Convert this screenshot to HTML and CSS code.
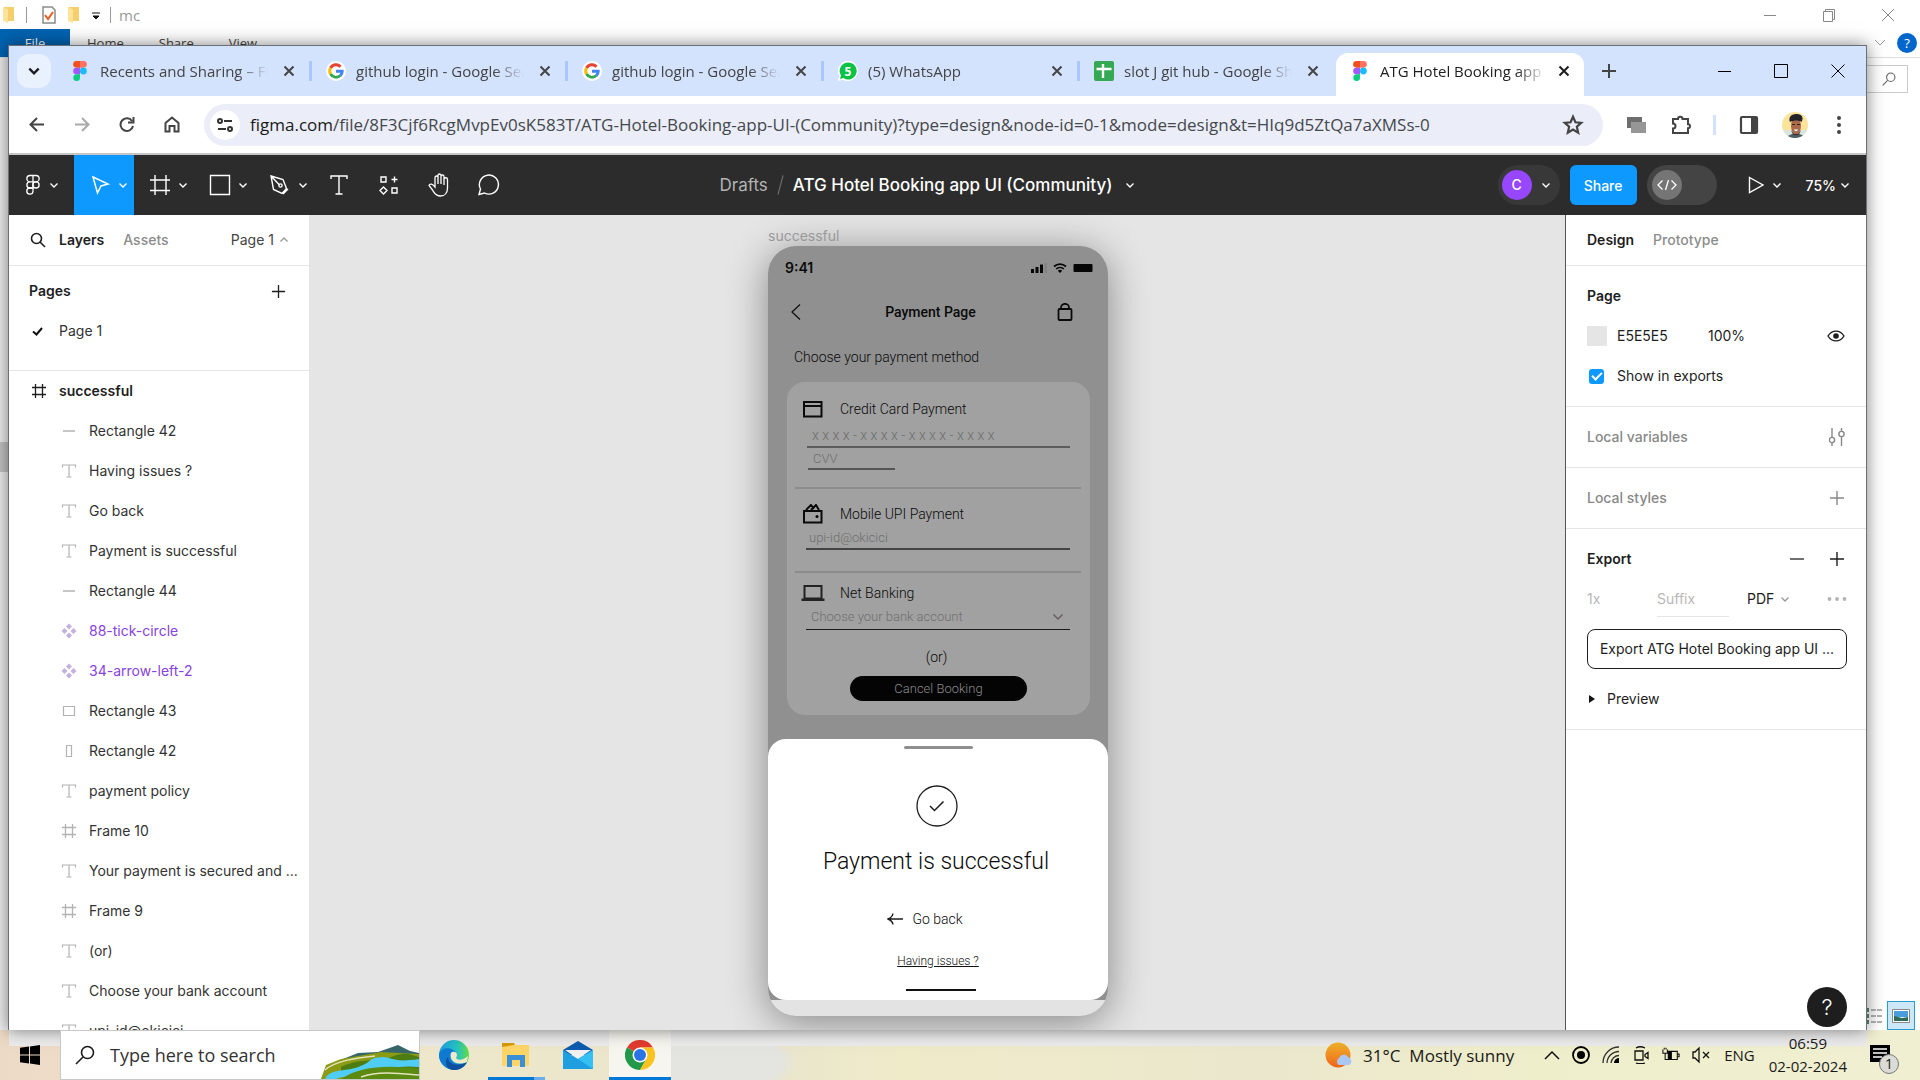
FILE: index.html
```html
<!DOCTYPE html>
<html lang="en">
<head>
<meta charset="utf-8">
<title>ATG Hotel Booking app UI (Community) – Figma</title>
<link rel="stylesheet" href="styles.css">
</head>
<body>
<svg class="defs" aria-hidden="true">
  <symbol id="chev" viewBox="0 0 10 10"><path d="M1.500 3.500 5 7l3.500-3.500" fill="none" stroke="currentColor" stroke-width="1.400"/></symbol>
  <symbol id="cross" viewBox="0 0 12 12"><path d="M1.500 1.500l9 9m0-9l-9 9" fill="none" stroke="currentColor" stroke-width="2"/></symbol>
  <symbol id="plus" viewBox="0 0 16 16"><path d="M8 1v14M1 8h14" fill="none" stroke="currentColor" stroke-width="1.400"/></symbol>
  <symbol id="figma" viewBox="0 0 14 20"><path d="M7 0H3.500a3.300 3.300 0 0 0 0 6.660H7z" fill="#f24e1e"/><path d="M7 0h3.500a3.300 3.300 0 0 1 0 6.660H7z" fill="#ff7262"/><path d="M7 6.660H3.500a3.300 3.300 0 0 0 0 6.660H7z" fill="#a259ff"/><circle cx="10.400" cy="10" r="3.400" fill="#1abcfe"/><path d="M7 13.320H3.500A3.340 3.340 0 1 0 7 16.700z" fill="#0acf83"/></symbol>
  <symbol id="google" viewBox="0 0 20 20"><circle cx="10" cy="10" r="10" fill="#fff"/><g fill="none" stroke-width="3"><path d="M4.500 7A6.200 6.200 0 0 1 14.500 5.700" stroke="#ea4335"/><path d="M4.700 13.200A6.200 6.200 0 0 1 4.500 6.900" stroke="#fbbc05"/><path d="M14.300 14.500A6.200 6.200 0 0 1 4.600 13" stroke="#34a853"/><path d="M10 10.200h6.200c0 1.800-.700 3.300-1.900 4.400" stroke="#4285f4"/></g></symbol>
  <symbol id="text" viewBox="0 0 16 16"><path d="M1.500 4.500V2h13v2.500M8 2v12M5.500 14h5" fill="none" stroke="currentColor" stroke-width="1.200"/></symbol>
  <symbol id="frame" viewBox="0 0 16 16"><path d="M4.500 1v14M11.500 1v14M1 4.500h14M1 11.500h14" fill="none" stroke="currentColor" stroke-width="1.300"/></symbol>
  <symbol id="line" viewBox="0 0 16 16"><path d="M2 8h12" fill="none" stroke="currentColor" stroke-width="1.500"/></symbol>
  <symbol id="rect" viewBox="0 0 16 16"><path d="M2.500 3.500h11v9h-11z" fill="none" stroke="currentColor" stroke-width="1.200"/></symbol>
  <symbol id="tall" viewBox="0 0 16 16"><path d="M5.500 2.500h5v11h-5z" fill="none" stroke="currentColor" stroke-width="1.200"/></symbol>
  <symbol id="comp" viewBox="0 0 16 16"><path d="M8 .500l3 3-3 3-3-3zM8 9.500l3 3-3 3-3-3zM3.500 5l3 3-3 3-3-3zM12.500 5l3 3-3 3-3-3z" fill="currentColor"/></symbol>
  <symbol id="folder" viewBox="0 0 14 18"><path d="M2 1h10v14H4z" fill="#f5cf6b"/><path d="M1 1l5 2.500V17l-5-2z" fill="#ffe398"/></symbol>
  <symbol id="search" viewBox="0 0 20 20"><circle cx="12.500" cy="7.500" r="6" fill="none" stroke="currentColor" stroke-width="1.600"/><path d="M8 12L1 19" stroke="currentColor" stroke-width="1.600"/></symbol>
</svg>

<section class="explorer" aria-label="File Explorer">
  <header class="ex-title">
    <svg class="ex-folder"><use href="#folder"/></svg><i class="ex-sep"></i>
    <svg class="ex-doc" viewBox="0 0 14 18"><path d="M1 1h9l3 3v13H1z" fill="#fff" stroke="#8a8a8a" stroke-width="1.500"/><path d="M3 9l3 4 5-7" fill="none" stroke="#ef5a1c" stroke-width="2"/></svg>
    <svg class="ex-folder"><use href="#folder"/></svg>
    <svg class="ex-drop" viewBox="0 0 8 8"><path d="M0 1h8M1 4h6L4 7z" fill="#111" stroke="#111"/></svg>
    <i class="ex-sep"></i><span class="ex-name">mc</span>
    <span class="ex-ctl">
      <svg viewBox="0 0 14 14"><path d="M1 7.500h12" stroke="#888" fill="none"/></svg>
      <svg viewBox="0 0 14 14"><path d="M1.500 3.500h9v10h-9zM3.500 3.500v-2h9v10h-2" stroke="#888" fill="none"/></svg>
      <svg viewBox="0 0 14 14"><path d="M1 1l12 12M13 1L1 13" stroke="#888" fill="none"/></svg>
    </span>
  </header>
  <nav class="ex-menu">
    <button class="ex-file">File</button><button>Home</button><button>Share</button><button>View</button>
    <svg class="ex-chev" viewBox="0 0 12 8"><path d="M1 1l5 5 5-5" stroke="#999" fill="none"/></svg>
    <button class="ex-help">?</button>
  </nav>
  <div class="ex-body">
    <i class="ex-thumb"></i>
    <div class="ex-right">
      <div class="ex-search"><svg><use href="#search"/></svg></div>
      <div class="ex-views">
        <svg class="ex-list" viewBox="0 0 16 18"><path d="M0 1h3v4H0zM0 7h3v4H0zM0 13h3v4H0z" fill="#5c8a70"/><path d="M5 3h11M5 9h11M5 15h11" stroke="#666" stroke-dasharray="5 1"/></svg>
        <span class="ex-view-on"><svg viewBox="0 0 18 14"><path d="M.500.500h17v13H.500z" fill="#fff" stroke="#888"/><path d="M2 2h14v6H2z" fill="#4b9ede"/><path d="M2 7l8 2 6-1v4H2z" fill="#2e6b58"/></svg></span>
      </div>
    </div>
  </div>
</section>

<main class="window">
  <header class="tabs">
    <button class="tab-search" aria-label="Search tabs"><svg viewBox="0 0 12 12"><path d="M2 4l4 4 4-4" fill="none" stroke="#1b1b1f" stroke-width="2"/></svg></button>
    <div class="tab"><svg class="fav-figma"><use href="#figma"/></svg><span>Recents and Sharing – Figma</span><button aria-label="Close"><svg><use href="#cross"/></svg></button></div>
    <div class="tab"><svg><use href="#google"/></svg><span>github login - Google Search</span><button aria-label="Close"><svg><use href="#cross"/></svg></button></div>
    <div class="tab"><svg><use href="#google"/></svg><span>github login - Google Search</span><button aria-label="Close"><svg><use href="#cross"/></svg></button></div>
    <div class="tab"><svg viewBox="0 0 20 20"><path d="M10 0a10 10 0 1 1-5 18.700L0 20l1.300-5A10 10 0 0 1 10 0z" fill="#fff"/><path d="M10 1.500a8.500 8.500 0 1 1-4.500 15.600L2 18l1-3.500A8.500 8.500 0 0 1 10 1.500z" fill="#0ac244"/><text x="10" y="14.500" class="badge5">5</text></svg><span>(5) WhatsApp</span><button aria-label="Close"><svg><use href="#cross"/></svg></button></div>
    <div class="tab last"><svg viewBox="0 0 20 20"><rect width="20" height="20" rx="2" fill="#34a853"/><path d="M9 3v14M2.500 8h15" stroke="#fff" stroke-width="2.400"/></svg><span>slot J git hub - Google Sheets</span><button aria-label="Close"><svg><use href="#cross"/></svg></button></div>
    <div class="tab active"><svg class="fav-figma"><use href="#figma"/></svg><span>ATG Hotel Booking app UI (Community)</span><button aria-label="Close"><svg><use href="#cross"/></svg></button></div>
    <button class="new-tab" aria-label="New tab"><svg viewBox="0 0 14 14"><path d="M7 0v14M0 7h14" stroke="#444" stroke-width="2"/></svg></button>
    <div class="win-ctl">
      <button aria-label="Minimize"><svg viewBox="0 0 14 14"><path d="M1 7.500h13" stroke="#000"/></svg></button>
      <button aria-label="Maximize"><svg viewBox="0 0 14 14"><path d="M.500.500h13v13H.500z" fill="none" stroke="#000"/></svg></button>
      <button aria-label="Close"><svg viewBox="0 0 14 14"><path d="M.500.500l13 13m0-13l-13 13" stroke="#000"/></svg></button>
    </div>
  </header>

  <div class="nav">
    <button aria-label="Back"><svg viewBox="0 0 16 16"><path d="M15 8H2M8 1.500L1.500 8 8 14.500" fill="none" stroke="#444" stroke-width="2"/></svg></button>
    <button aria-label="Forward"><svg viewBox="0 0 16 16"><path d="M1 8h13M8 1.500L14.500 8 8 14.500" fill="none" stroke="#aaa" stroke-width="2"/></svg></button>
    <button aria-label="Reload"><svg viewBox="0 0 16 16"><path d="M14 9.500A6.300 6.300 0 1 1 13 4.500M14.500.500V6H9" fill="none" stroke="#444" stroke-width="2"/></svg></button>
    <button aria-label="Home"><svg viewBox="0 0 16 16"><path d="M1.500 6.500L8 1l6.500 5.500v8.500h-4V9.500h-5V15h-4z" fill="none" stroke="#444" stroke-width="2"/></svg></button>
    <div class="omni">
      <span class="site"><svg viewBox="0 0 16 16"><g fill="none" stroke="#333" stroke-width="2"><circle cx="3" cy="4" r="2"/><path d="M7 4h8M1 12h8"/><circle cx="13" cy="12" r="2"/></g></svg></span>
      <div class="url" role="textbox" aria-label="Address"><b>figma.com</b>/file/8F3Cjf6RcgMvpEv0sK583T/ATG-Hotel-Booking-app-UI-(Community)?type=design&amp;node-id=0-1&amp;mode=design&amp;t=HIq9d5ZtQa7aXMSs-0</div>
      <svg class="star" viewBox="0 0 20 20"><path d="M10 2.500l2.200 5 5.300.500-4 3.600 1.200 5.400-4.700-2.900L5.300 17l1.200-5.400-4-3.600 5.300-.500z" fill="none" stroke="#444" stroke-width="2"/></svg>
    </div>
    <div class="nav-right">
      <svg viewBox="0 0 20 20"><path d="M1 2h15v11H1z" fill="#6e6e6e"/><path d="M5 7h15v11H5z" fill="#969696"/></svg>
      <svg viewBox="0 0 20 20"><path d="M2 4h5a2.200 2.200 0 0 1 4.500 0H17v5.200a2 2 0 0 1 0 4V18H2v-4.500a2.500 2.500 0 0 0 0-5z" fill="none" stroke="#444" stroke-width="2"/></svg>
      <i class="nav-sep"></i>
      <svg viewBox="0 0 20 20"><rect x="2" y="2" width="16" height="16" rx="1" fill="none" stroke="#444" stroke-width="2.200"/><path d="M12 2h6v16h-6z" fill="#444"/></svg>
      <svg class="face" viewBox="0 0 26 26"><clipPath id="fc"><circle cx="13" cy="13" r="13"/></clipPath><g clip-path="url(#fc)"><path d="M0 0h26v26H0z" fill="#fbe39a"/><path d="M0 18h26v8H0z" fill="#d8e6e0"/><path d="M5 26c2-6 16-6 17 0z" fill="#4a5d66"/><ellipse cx="14" cy="14" rx="5" ry="8" fill="#a9694a"/><path d="M8 10c-2-4 1-8.500 7-8 5 0 7 4 4.500 8-3-2-7-2-11.500 0z" fill="#22232b"/><path d="M9.500 18c0 7 9 7 9 0-1 2-1.500 4-4.500 4s-3.500-2-4.500-4z" fill="#4a2c22"/><path d="M11.500 17.500h5l-2.500 2z" fill="#fff"/><path d="M10 12.500h3M15 12.500h3" stroke="#3a241d"/></g></svg>
      <svg viewBox="0 0 20 20"><g fill="#444"><circle cx="10" cy="3" r="2"/><circle cx="10" cy="10" r="2"/><circle cx="10" cy="17" r="2"/></g></svg>
    </div>
  </div>

  <div class="figbar">
    <div class="tools">
      <button class="main-menu" aria-label="Main menu"><svg viewBox="0 0 24 24"><g fill="none" stroke="#fff" stroke-width="1.300"><path d="M12 2.500H9a3.100 3.100 0 0 0 0 6.300h3zM12 2.500h3a3.100 3.100 0 0 1 0 6.300h-3zM12 8.800H9A3.100 3.100 0 0 0 9 15h3z"/><circle cx="15" cy="11.900" r="3.100"/><path d="M12 15H9a3.100 3.100 0 1 0 3 3.300z"/></g></svg><svg class="cv"><use href="#chev"/></svg></button>
      <button class="on" aria-label="Move"><svg viewBox="0 0 24 24"><path d="M5 4l15 7-7 2-3.500 7z" fill="none" stroke="#fff" stroke-width="1.500"/></svg><svg class="cv"><use href="#chev"/></svg></button>
      <button aria-label="Frame"><svg viewBox="0 0 24 24"><path d="M7 2v20M18 2v20M2 7h20M2 17.500h20" stroke="#fff" stroke-width="1.400"/></svg><svg class="cv"><use href="#chev"/></svg></button>
      <button aria-label="Rectangle"><svg viewBox="0 0 24 24"><path d="M2.500 2.500h19v19h-19z" fill="none" stroke="#fff" stroke-width="1.400"/></svg><svg class="cv"><use href="#chev"/></svg></button>
      <button aria-label="Pen"><svg viewBox="0 0 24 24"><g fill="none" stroke="#fff" stroke-width="1.400"><path d="M3 3l12 3.500 3.500 9-4.500 5-8.500-4zM3 3l8.500 9M15 21l5-5"/><circle cx="12.500" cy="12.500" r="1.600"/></g></svg><svg class="cv"><use href="#chev"/></svg></button>
      <button class="solo" aria-label="Text"><svg viewBox="0 0 24 24"><path d="M4 6V3h16v3M12 3v18M8.500 21h7" fill="none" stroke="#fff" stroke-width="1.400"/></svg></button>
      <button class="solo" aria-label="Resources"><svg viewBox="0 0 24 24"><path d="M4 4h5v5H4zM17.500 3.500v6M14.500 6.500h6M15 15h5v5h-5zM6.500 14l3.500 3.500L6.500 21 3 17.500z" fill="none" stroke="#fff" stroke-width="1.400"/></svg></button>
      <button class="solo" aria-label="Hand"><svg viewBox="0 0 24 24"><path d="M8 12V4.500a1.500 1.500 0 0 1 3 0V11 2.500a1.500 1.500 0 0 1 3 0V11 3.500a1.500 1.500 0 0 1 3 0V12 6.500a1.500 1.500 0 0 1 3.500 0V15c0 5-3 8-7 8-5 0-6-3-8-6l-3.500-4.500c1-2.500 3.500-1.500 6 1.500z" fill="none" stroke="#fff" stroke-width="1.300"/></svg></button>
      <button class="solo" aria-label="Comment"><svg viewBox="0 0 24 24"><path d="M2 21.500l1.500-5.500A9.500 9.500 0 1 1 7.500 20z" fill="none" stroke="#fff" stroke-width="1.400"/></svg></button>
    </div>
    <h1 class="doc"><span>Drafts</span><i></i>ATG Hotel Booking app UI (Community)<svg class="cv"><use href="#chev"/></svg></h1>
    <div class="fig-right">
      <button class="user"><b>C</b><svg class="cv"><use href="#chev"/></svg></button>
      <button class="share">Share</button>
      <button class="dev" aria-label="Dev mode"><span><svg viewBox="0 0 20 12"><path d="M5.500 1.500L1 6l4.500 4.500M14.500 1.500L19 6l-4.500 4.500M11.500 1l-3 10" fill="none" stroke="#fff" stroke-width="1.300"/></svg></span></button>
      <button class="play" aria-label="Present"><svg viewBox="0 0 16 18"><path d="M1.500 1.500L15 9 1.500 16.500z" fill="none" stroke="#fff" stroke-width="1.400"/></svg><svg class="cv"><use href="#chev"/></svg></button>
      <button class="zoom">75%<svg class="cv"><use href="#chev"/></svg></button>
    </div>
  </div>

  <div class="work">
    <aside class="left">
      <div class="left-head"><svg class="mag" viewBox="0 0 16 16"><circle cx="6.500" cy="6.500" r="5" fill="none" stroke="#1e1e1e" stroke-width="1.600"/><path d="M10 10l5 5" stroke="#1e1e1e" stroke-width="1.600"/></svg><button class="strong">Layers</button><button class="muted">Assets</button><button class="pg">Page 1<svg class="cv up"><use href="#chev"/></svg></button></div>
      <section class="pages">
        <div class="pages-head"><h2>Pages</h2><button aria-label="Add page"><svg><use href="#plus"/></svg></button></div>
        <div class="row top"><svg class="check" viewBox="0 0 16 16"><path d="M2 8.500L5.500 11.500 11 5" fill="none" stroke="#111" stroke-width="2"/></svg>Page 1</div>
      </section>
      <ul class="layers">
        <li class="row top strong"><svg><use href="#frame"/></svg>successful</li>
        <li class="row"><svg><use href="#line"/></svg>Rectangle 42</li>
        <li class="row"><svg><use href="#text"/></svg>Having issues ?</li>
        <li class="row"><svg><use href="#text"/></svg>Go back</li>
        <li class="row"><svg><use href="#text"/></svg>Payment is successful</li>
        <li class="row"><svg><use href="#line"/></svg>Rectangle 44</li>
        <li class="row comp"><svg><use href="#comp"/></svg>88-tick-circle</li>
        <li class="row comp"><svg><use href="#comp"/></svg>34-arrow-left-2</li>
        <li class="row"><svg><use href="#rect"/></svg>Rectangle 43</li>
        <li class="row"><svg><use href="#tall"/></svg>Rectangle 42</li>
        <li class="row"><svg><use href="#text"/></svg>payment policy</li>
        <li class="row"><svg><use href="#frame"/></svg>Frame 10</li>
        <li class="row"><svg><use href="#text"/></svg>Your payment is secured and ...</li>
        <li class="row"><svg><use href="#frame"/></svg>Frame 9</li>
        <li class="row"><svg><use href="#text"/></svg>(or)</li>
        <li class="row"><svg><use href="#text"/></svg>Choose your bank account</li>
        <li class="row"><svg><use href="#text"/></svg>upi-id@okicici</li>
      </ul>
    </aside>

    <div class="canvas">
      <div class="artboard">
        <p class="ab-name">successful</p>
        <div class="phone">
          <div class="screen">
            <div class="status"><b>9:41</b>
              <svg class="sig" viewBox="0 0 16 10"><path d="M0 6h3v4H0zM4.500 4h3v6h-3zM9 1.500h3V10H9z" fill="#060606"/><path d="M13.500 0H16v10h-2.500z" fill="#848484"/></svg>
              <svg class="wifi" viewBox="0 0 14 10"><path d="M1 3.500a9 9 0 0 1 12 0M3.200 6a5.500 5.500 0 0 1 7.600 0" fill="none" stroke="#060606" stroke-width="1.700"/><path d="M4.800 7.700a3.400 3.400 0 0 1 4.400 0L7 10z" fill="#060606"/></svg>
              <svg class="bat" viewBox="0 0 20 10"><rect x=".5" y="1" width="19" height="8" rx="1" fill="#060606"/></svg>
            </div>
            <div class="ph-head"><svg class="back" viewBox="0 0 10 16"><path d="M9 .500L1 8l8 7.500" fill="none" stroke="#111" stroke-width="1.300"/></svg><h2>Payment Page</h2><svg class="lock" viewBox="0 0 16 18"><path d="M4 6V4.500a4 3.700 0 0 1 8 0V6" fill="none" stroke="#0a0a0a" stroke-width="1.700"/><rect x="1.500" y="6" width="13" height="11" rx="1" fill="none" stroke="#0a0a0a" stroke-width="1.800"/></svg></div>
            <p class="choose">Choose your payment method</p>
            <div class="card">
              <div class="method"><svg viewBox="0 0 24 20"><path d="M3 3h17.500v14.500H3zM3 7h17.500" fill="none" stroke="#0a0a0a" stroke-width="2"/></svg><label for="cc">Credit Card Payment</label></div>
              <input id="cc" class="f-card" placeholder="x x x x - x x x x - x x x x - x x x x">
              <input class="f-cvv" aria-label="CVV" placeholder="CVV">
              <hr>
              <div class="method upi"><svg viewBox="0 0 24 20"><path d="M3 7h17.500v11.500H3zM5 6l5-5 3 4M10 6l5-5 3 5" fill="none" stroke="#0a0a0a" stroke-width="2"/><circle cx="16" cy="12.500" r="1.500"/></svg><label for="upi">Mobile UPI Payment</label></div>
              <input id="upi" class="f-upi" placeholder="upi-id@okicici">
              <hr>
              <div class="method net"><svg viewBox="0 0 24 20"><path d="M3.500 3h17v12.500h-17z" fill="none" stroke="#222" stroke-width="2"/><path d="M.500 15.500h23v2.500H.500z" fill="#222"/></svg><label for="bank">Net Banking</label></div>
              <div class="f-bank"><select id="bank"><option>Choose your bank account</option></select><svg viewBox="0 0 12 8"><path d="M1.500 1.500L6 6l4.500-4.500" fill="none" stroke="#695f62" stroke-width="1.500"/></svg></div>
              <p class="or">(or)</p>
              <button class="cancel">Cancel Booking</button>
            </div>
            <div class="sheet">
              <i class="grab"></i>
              <svg class="tick" viewBox="0 0 44 44"><circle cx="22" cy="22" r="20" fill="none" stroke="#1c1c1c" stroke-width="1.300"/><path d="M15 22l4.500 4.500 9-9" fill="none" stroke="#1c1c1c" stroke-width="1.500"/></svg>
              <p class="ok">Payment is successful</p>
              <button class="goback"><svg viewBox="0 0 16 12"><path d="M16 6H1M6 .500C5.500 3.500 3.500 5 1 6c2.500 1 4.500 2.500 5 5.500" fill="none" stroke="#1c1c1c" stroke-width="1.400"/></svg>Go back</button>
              <a class="issues" href="#help">Having issues ?</a>
              <i class="homebar"></i>
            </div>
          </div>
        </div>
      </div>
    </div>

    <aside class="right">
      <div class="right-head"><button class="strong">Design</button><button class="muted">Prototype</button></div>
      <section class="page-sec">
        <h2>Page</h2>
        <div class="r-row"><i class="swatch"></i><span class="hex">E5E5E5</span><span>100%</span><svg class="eye" viewBox="0 0 18 12"><path d="M1 6c4-6.500 12-6.500 16 0-4 6.500-12 6.500-16 0z" fill="none" stroke="#1e1e1e" stroke-width="1.400"/><circle cx="9" cy="6" r="2.800" fill="#1e1e1e"/></svg></div>
        <label class="r-row exp"><input type="checkbox" checked>Show in exports</label>
      </section>
      <section class="thin"><h2>Local variables</h2><svg viewBox="0 0 16 18"><g fill="none" stroke="#888" stroke-width="1.400"><path d="M3 0v9M3 15v3M12.500 0v3M12.500 9v9"/><circle cx="3" cy="12" r="2.600"/><circle cx="12.500" cy="6" r="2.600"/></g></svg></section>
      <section class="thin"><h2>Local styles</h2><svg><use href="#plus"/></svg></section>
      <section class="export">
        <div class="r-row"><h2>Export</h2><svg class="minus" viewBox="0 0 16 16"><path d="M1 8h14" stroke="#333" stroke-width="1.400"/></svg><svg class="add"><use href="#plus"/></svg></div>
        <div class="r-row opts"><input class="scale" aria-label="Scale" placeholder="1x"><input class="suffix" aria-label="Suffix" placeholder="Suffix"><select aria-label="Format"><option>PDF</option></select><svg class="cv"><use href="#chev"/></svg><svg class="dots" viewBox="0 0 20 4"><g fill="#b3b3b3"><circle cx="2.500" cy="2" r="1.900"/><circle cx="10" cy="2" r="1.900"/><circle cx="17.500" cy="2" r="1.900"/></g></svg></div>
        <button class="do-export">Export ATG Hotel Booking app UI ...</button>
        <button class="preview"><svg viewBox="0 0 6 8"><path d="M0 0l6 4-6 4z" fill="#111"/></svg>Preview</button>
      </section>
      <button class="help">?</button>
    </aside>
  </div>
</main>

<footer class="taskbar">
  <button class="start" aria-label="Start"><svg viewBox="0 0 20 20"><path d="M0 2.800l9-1.300v8H0zM10 1.400L20 0v9.500H10zM0 10.500h9v8l-9-1.300zM10 10.500h10V20l-10-1.400z"/></svg></button>
  <label class="tb-search"><svg class="tb-mag"><use href="#search"/></svg><input aria-label="Search" placeholder="Type here to search">
    <svg class="hills" viewBox="0 0 98 34"><path d="M22 14l15-6 20-1 20-7 12 6 9 2v26H0z" fill="#36656a"/><path d="M5 20l15-6 40-7 38 2v25H0z" fill="#8b9b14"/><path d="M20 22c20-10 35-4 50-10s20-2 28 0v18H20z" fill="#4d7d12"/><path d="M4 34c6-12 22-6 38-14 10-4 4-7 20-8 8 0 10 6 36 2v8c-20-2-30 2-45 6s-30 2-38 6z" fill="#4fcdf5"/><path d="M20 34c20-14 50-14 78-10v10z" fill="#5b8a10"/><path d="M4 25c10-9 30-12 50-14M40 32c18-6 35-4 58-2" fill="none" stroke="#e4e3bd" stroke-width="1.500"/></svg>
  </label>
  <nav class="apps">
    <button aria-label="Edge"><svg viewBox="0 0 30 30"><defs><linearGradient id="eg" x1="0" x2="1"><stop offset="0" stop-color="#1b9de2"/><stop offset=".6" stop-color="#27c3c3"/><stop offset="1" stop-color="#62dc45"/></linearGradient></defs><circle cx="15" cy="15" r="15" fill="url(#eg)"/><path d="M0 15C1 7 13 6 17 13c-5-1-7 5-4 8 4 4 10 3 15 1-4 8-13 10-20 6C3 25 0 20 0 15z" fill="#0f7bd0"/><path d="M9 17c0 8 10 10 19 5-4 8-12 9-17 7S6 20 9 17z" fill="#10509f"/><path d="M13 12c5-1 6 3 4 6 2 3 8 2 12-2l-1 6c-8 3-13 1-15-2s-2-7 0-8z" fill="#efe8cb"/></svg></button>
    <button class="run part" aria-label="File Explorer"><svg viewBox="0 0 30 30"><path d="M1 3h12l2 4H1z" fill="#d99a06"/><path d="M1 7l12-2h15v21H1z" fill="#fed567"/><path d="M6 27V15h18v12h-5v-7h-8v7z" fill="#3a8fd8"/></svg></button>
    <button aria-label="Mail"><svg viewBox="0 0 30 30"><path d="M0 10L15 1l15 9v5H0z" fill="#0b5cae"/><path d="M2 10h26L15 19z" fill="#f1f1f1"/><path d="M0 10l15 9 15-9v19H0z" fill="#1f9fe0"/><path d="M30 10v19L15 19z" fill="#35c0f3"/></svg></button>
    <button class="run now" aria-label="Chrome"><svg viewBox="0 0 30 30"><path d="M15 15L2 7.500A15 15 0 0 1 28 7.500H15z" fill="#e33b2e"/><path d="M15 15L2 7.500A15 15 0 0 0 15 30l6.500-11.200z" fill="#22984a"/><path d="M15 7.500h13A15 15 0 0 1 15 30l6.500-11.200z" fill="#fcc31e"/><circle cx="15" cy="15" r="7.500" fill="#fff"/><circle cx="15" cy="15" r="6" fill="#2b74e8"/></svg></button>
  </nav>
  <div class="tray">
    <svg class="sun" viewBox="0 0 28 28"><defs><linearGradient id="sg" y2="1" x2="0"><stop offset="0" stop-color="#f0b429"/><stop offset="1" stop-color="#f0631a"/></linearGradient></defs><circle cx="13" cy="14" r="12.500" fill="url(#sg)"/><path d="M14 24a4 4 0 0 1 0-7 5 5 0 0 1 9-1 4.300 4.300 0 0 1 1 8z" fill="#a9c8f5"/></svg>
    <span class="temp">31°C&nbsp; Mostly sunny</span>
    <svg class="t-up" viewBox="0 0 16 10"><path d="M1 9l7-7 7 7" fill="none" stroke="#111" stroke-width="1.500"/></svg>
    <svg viewBox="0 0 18 18"><circle cx="9" cy="9" r="8" fill="none" stroke="#000" stroke-width="1.800"/><circle cx="9" cy="9" r="4"/></svg>
    <svg viewBox="0 0 18 18"><g fill="none" stroke="#333" stroke-width="1.300"><path d="M1 17A16 16 0 0 1 17 1M5 17A12 12 0 0 1 17 5.500M9 17a8 8 0 0 1 8-7.500"/></g><path d="M12 17a5 5 0 0 1 5-5v5z"/></svg>
    <svg viewBox="0 0 18 18"><path d="M3 5h8v9H3zM13 8.500l3-2v6l-3-2zM4 2q4-2.500 9 0M4 17q4 1.500 9 0" fill="none" stroke="#111" stroke-width="1.300"/></svg>
    <svg viewBox="0 0 20 18"><path d="M7 5h10v9H7zM1 3v4h5V3M2.500 1v2M4.500 1v2M3.500 7v7H7M17 8h2v3h-2" fill="none" stroke="#111" stroke-width="1.200"/><path d="M7 5h4v9H7z"/></svg>
    <svg viewBox="0 0 18 18"><path d="M1 6h2l4-4v14l-4-4H1zM11 6l6 6M17 6l-6 6" fill="none" stroke="#111" stroke-width="1.300"/></svg>
    <span class="lang">ENG</span>
    <time class="clock"><span>06:59</span><span>02-02-2024</span></time>
    <button class="note" aria-label="Notifications"><svg viewBox="0 0 20 20"><path d="M0 0h20v17h-6v3l-5-3H0z"/><path d="M3 4h14M3 8h14M3 12h9" stroke="#fff" stroke-width="1.300"/></svg><b>1</b></button>
  </div>
</footer>
</body>
</html>
```

FILE: styles.css
```css
* { box-sizing: border-box; }
body { margin: 0; height: 100vh; overflow: hidden; position: relative; display: flex; flex-direction: column; background: #eee8ca; font-family: Inter, "Liberation Sans", sans-serif; font-size: 14px; color: #1e1e1e; }
button { border: 0; padding: 0; margin: 0; background: none; font: inherit; color: inherit; display: flex; align-items: center; justify-content: center; }
input, select { border: 0; padding: 0; margin: 0; background: none; font: inherit; color: inherit; min-width: 0; appearance: none; border-radius: 0; }
h1, h2, p, ul { margin: 0; padding: 0; font-size: inherit; font-weight: inherit; list-style: none; }
svg { display: block; flex: none; }
.defs { position: absolute; width: 0; height: 0; }
.cv { width: 10px; height: 10px; }
.cv.up { transform: rotate(180deg); }
.strong, h2 { font-weight: 600; }
.muted { color: #8c8c8c; font-weight: 500; }

/* File Explorer behind the browser */
.explorer { flex: 1; display: flex; flex-direction: column; background: #fff; font-family: "Open Sans", sans-serif; }
.ex-title { height: 29px; display: flex; align-items: center; padding: 0 25px 0 2px; }
.ex-folder { width: 14px; height: 18px; }
.ex-doc { width: 14px; height: 18px; margin-left: 15px; margin-right: 11px; }
.ex-sep { width: 1px; height: 16px; background: #999; margin-left: 10px; }
.ex-drop { width: 8px; height: 8px; margin: 2px 0 0 11px; }
.ex-name { margin-left: 8px; color: #999; font-size: 15px; }
.ex-ctl { margin-left: auto; display: flex; gap: 45px; }
.ex-ctl svg { width: 14px; height: 14px; }
.ex-menu { height: 29px; display: flex; align-items: center; border-bottom: 1px solid #ddd; padding-right: 3px; color: #444; gap: 35px; font-size: 13px; }
.ex-file { width: 70px; height: 28px; background: #0063b1; color: #fff; margin-right: -18px; }
.ex-chev { width: 12px; height: 8px; margin-left: auto; margin-right: -24px; }
.ex-help { width: 20px; height: 20px; border-radius: 50%; background: #0066cc; color: #fff; }
.ex-body { flex: 1; display: flex; justify-content: space-between; background: linear-gradient(90deg, #eee 9px, #fff 9px); }
.ex-thumb { width: 9px; height: 30px; margin-top: 384px; background: #c4c4c4; }
.ex-right { display: flex; flex-direction: column; justify-content: space-between; padding: 7px 5px 0 0; }
.ex-search { width: 60px; height: 28px; border: 1px solid #ccc; margin-right: 7px; display: flex; align-items: center; justify-content: flex-end; padding-right: 11px; color: #666; }
.ex-search svg { width: 14px; height: 14px; }
.ex-views { display: flex; align-items: center; justify-content: flex-end; gap: 5px; }
.ex-list { width: 16px; height: 18px; }
.ex-view-on { width: 28px; height: 29px; border: 1px solid #2a9bd4; background: #cce8f6; display: flex; align-items: center; justify-content: center; }
.ex-view-on svg { width: 18px; height: 14px; }

/* Browser window */
.window { position: absolute; inset: 45px 53px 50px 8px; border: 1px solid #6c6f78; border-bottom: 0; background: #fff; display: flex; flex-direction: column; box-shadow: 0 0 16px rgba(0,0,0,.5); overflow: hidden; }
.tabs { height: 50px; background: #d3e2fd; display: flex; align-items: center; padding-left: 8px; font-family: "Open Sans", sans-serif; color: #444; flex: none; }
.tab-search { width: 34px; height: 34px; flex: none; border-radius: 12px; background: #e9f0fe; margin-right: 5px; }
.tab-search svg { width: 14px; height: 14px; }
.tab { flex: 0 1 256px; min-width: 0; height: 43px; margin-top: 7px; padding: 0 17px 7px 14px; display: flex; align-items: center; gap: 10px; position: relative; font-size: 15px; }
.tab > svg { width: 20px; height: 20px; }
.tab > .fav-figma { width: 14px; margin: 0 3px; }
.tab > span { flex: 1; min-width: 0; white-space: nowrap; overflow: hidden; -webkit-mask-image: linear-gradient(90deg, #000 calc(100% - 30px), transparent); mask-image: linear-gradient(90deg, #000 calc(100% - 30px), transparent); }
.tab > button { margin-left: 5px; }
.tab > button svg { width: 12px; height: 12px; }
.tab::after { content: ""; position: absolute; right: 0; top: 8px; width: 3px; height: 20px; background: #a8c7fa; }
.tab.last::after, .tab.active::after { display: none; }
.tab.active { flex-basis: 248px; background: #fff; border-radius: 12px 12px 0 0; color: #1e1e1e; padding-right: 14px; }
.tab.active > button { margin-left: 2px; }
.badge5 { font: 700 12px "Open Sans", sans-serif; fill: #fff; text-anchor: middle; }
.new-tab { margin-left: 18px; }
.new-tab svg { width: 14px; height: 14px; }
.win-ctl { margin-left: auto; display: flex; }
.win-ctl button { width: 57px; height: 50px; }
.win-ctl svg { width: 14px; height: 14px; }

.nav { height: 59px; border-bottom: 2px solid #c6c6c6; display: flex; align-items: center; padding-left: 5px; flex: none; }
.nav > button { width: 45px; height: 42px; }
.nav > button svg { width: 16px; height: 17px; }
.omni { flex: 1; height: 42px; margin-left: 10px; border-radius: 21px; background: #ebeef8; display: flex; align-items: center; padding: 0 19px 0 6px; }
.site { width: 30px; height: 30px; border-radius: 50%; background: #fff; display: flex; align-items: center; justify-content: center; margin-right: 10px; }
.site svg { width: 16px; height: 16px; }
.url { flex: 1; white-space: nowrap; overflow: hidden; font: 17px/26px "Open Sans", sans-serif; padding-top: 1px; color: #45484d; }
.url b { font-weight: 400; color: #1a1a1a; }
.star { width: 22px; height: 22px; }
.nav-right { display: flex; align-items: center; padding: 0 17px 0 23px; }
.nav-right svg { width: 20px; height: 20px; margin-right: 25px; }
.nav-right svg:last-child { margin: 0; }
.nav-right .nav-sep { width: 3px; height: 20px; background: #d3e2fd; margin: 0 23px 0 -3px; }
.nav-right .face { width: 26px; height: 26px; margin: 0 21px 0 -2px; }

/* Figma toolbar */
.figbar { height: 60px; flex: none; background: #2c2c2c; color: #fff; display: grid; grid-template-columns: 1fr auto 1fr; align-items: center; }
.tools { display: flex; }
.tools button { width: 60px; height: 60px; gap: 6px; justify-content: flex-start; padding-left: 14px; }
.tools button > svg:first-child { width: 24px; height: 24px; }
.tools .main-menu { width: 65px; padding-left: 12px; gap: 4px; }
.tools .on { background: #0d99ff; }
.tools .solo { width: 50px; padding-left: 13px; }
.doc { display: flex; align-items: center; font-size: 17px; font-weight: 500; padding-right: 20px; white-space: nowrap; }
.doc span { color: #b3b3b3; font-weight: 400; }
.doc i { width: 1px; height: 20px; background: #777; transform: rotate(15deg); margin: 0 12px; }
.doc .cv { margin-left: 13px; }
.fig-right { display: flex; align-items: center; justify-content: flex-end; padding-right: 16px; }
.user { width: 62px; height: 40px; border-radius: 20px; background: #383838; justify-content: flex-start; padding-left: 4px; gap: 9px; margin-right: 10px; }
.user b { width: 30px; height: 30px; border-radius: 50%; background: #9747ff; font-weight: 500; line-height: 30px; }
.share { width: 67px; height: 40px; border-radius: 6px; background: #0d99ff; font-weight: 500; margin-right: 10px; }
.dev { width: 70px; height: 40px; border-radius: 20px; background: #444; justify-content: flex-start; padding-left: 5px; margin-right: 31px; }
.dev span { width: 30px; height: 30px; border-radius: 50%; background: #757575; display: flex; align-items: center; justify-content: center; }
.dev svg { width: 20px; height: 12px; }
.play { gap: 8px; margin-right: 24px; }
.play svg:first-child { width: 16px; height: 18px; }
.zoom { gap: 4px; font-weight: 500; }

.work { flex: 1; min-height: 0; display: flex; line-height: 18px; }
.left { width: 300px; flex: none; background: #fff; overflow: hidden; }
.left-head { height: 51px; border-bottom: 1px solid #e6e6e6; display: flex; align-items: center; padding: 0 20px 0 21px; }
.mag { width: 16px; height: 16px; margin: 0 13px 0 0; }
.left-head .muted { margin-left: 19px; }
.pg { margin-left: auto; gap: 5px; color: #444; }
.pg .cv { color: #999; }
.pages { height: 105px; border-bottom: 1px solid #e6e6e6; padding-top: 5px; }
.pages-head { height: 40px; display: flex; align-items: center; justify-content: space-between; padding: 0 23px 0 20px; }
.pages-head svg { width: 15px; height: 15px; }
.row { height: 40px; display: flex; align-items: center; gap: 12px; padding-left: 52px; white-space: nowrap; color: #333; }
.row svg { width: 16px; height: 16px; color: #b3b3b3; }
.row.top { padding-left: 22px; }
.row.strong { color: #1e1e1e; }
.row.strong svg { color: #1e1e1e; }
.row.comp { color: #8742e0; }
.row.comp svg { color: #c5b0dd; }

.canvas { flex: 1; min-width: 0; background: #e5e5e5; padding: 11px 0 0 2px; display: flex; justify-content: center; overflow: hidden; }
.artboard { width: 340px; }
.ab-name { height: 20px; line-height: 20px; color: #999; font-size: 14px; }
.phone { border-radius: 28px; background: #e3e3e3; padding-bottom: 16px; overflow: hidden; box-shadow: 0 6px 40px rgba(0,0,0,.42); font-family: Roboto, sans-serif; font-weight: 300; color: #0a0a0a; }
.screen { background: #909090; }
.status { height: 44px; display: flex; align-items: center; padding: 0 15px 0 17px; }
.status b { font: 600 14px/18px Inter, sans-serif; margin-right: auto; }
.sig { width: 16px; height: 10px; margin-right: 6px; }
.wifi { width: 14px; height: 10px; margin-right: 6px; }
.bat { width: 20px; height: 10px; }
.ph-head { height: 44px; display: flex; align-items: center; justify-content: space-between; padding: 0 35px 0 23px; }
.ph-head h2 { font-weight: 500; padding-left: 3px; }
.back { width: 10px; height: 16px; }
.lock { width: 16px; height: 18px; }
.choose { height: 48px; line-height: 46px; padding-left: 26px; }
.card { margin: 0 18px 24px 19px; height: 333px; border-radius: 18px; background: #a1a1a1; padding-top: 15px; display: flex; flex-direction: column; }
.method { height: 24px; display: flex; align-items: center; gap: 15px; padding-left: 14px; flex: none; }
.method svg { width: 24px; height: 20px; }
.card input, .card select { font-size: 13px; padding: 0 0 0 5px; }
.card ::placeholder { color: #6f6f6f; opacity: 1; }
.card .f-card { height: 27px; margin: 0 20px; border-bottom: 2px solid #5c5c5c; font-size: 14px; padding-top: 2px; }
.card .f-cvv { width: 87px; height: 22px; margin-left: 21px; border-bottom: 2px solid #555; flex: none; }
.card hr { width: 286px; border: 0; height: 2px; background: #8c8c8c; margin: 17px 0 0 8px; }
.upi { margin-top: 13px; }
.card .f-upi { height: 24px; margin: 0 20px 0 19px; border-bottom: 2px solid #444; padding-left: 3px; }
.f-upi + hr { margin-top: 21px; }
.net { margin-top: 8px; }
.f-bank { height: 25px; margin: 0 20px 0 19px; border-bottom: 1px solid #1a1a1a; display: flex; align-items: center; padding-right: 6px; flex: none; }
.f-bank select { flex: 1; color: #6f6f6f; }
.f-bank svg { width: 12px; height: 8px; }
.or { margin-top: 15px; height: 24px; line-height: 24px; padding-right: 4px; text-align: center; }
.cancel { width: 177px; height: 25px; border-radius: 13px; background: #040404; color: #8c8c8c; font-size: 13px; align-self: center; margin-top: 7px; flex: none; }
.sheet { height: 261px; border-radius: 18px; background: #fff; display: flex; flex-direction: column; align-items: center; padding-top: 7px; }
.grab { width: 69px; height: 3px; border-radius: 2px; background: #8f8f8f; }
.tick { width: 44px; height: 44px; margin-top: 35px; margin-right: 2px; }
.ok { font-size: 23px; line-height: 30px; margin-top: 19px; margin-right: 4px; }
.goback { gap: 9px; height: 20px; margin-top: 32px; margin-right: 26px; }
.goback svg { width: 16px; height: 12px; }
.issues { font-size: 12px; line-height: 16px; margin-top: 24px; color: #111; }
.homebar { width: 70px; height: 2px; background: #111; margin: 20px 0 0 6px; }

.right { width: 301px; flex: none; background: #fff; border-left: 1px solid #555; position: relative; }
.right-head { height: 51px; border-bottom: 1px solid #e6e6e6; display: flex; gap: 19px; align-items: center; padding-left: 21px; }
.right section { border-bottom: 1px solid #e6e6e6; padding: 0 19px 0 21px; }
.right .page-sec { height: 141px; padding-top: 10px; }
.page-sec h2 { height: 40px; line-height: 40px; }
.r-row { height: 40px; display: flex; align-items: center; }
.r-row > svg { width: 16px; height: 16px; }
.swatch { width: 20px; height: 20px; background: #e5e5e5; border-radius: 1px; margin-right: 10px; }
.hex { width: 91px; }
.r-row > .eye { margin-left: auto; margin-right: 2px; width: 18px; height: 12px; }
.exp input { width: 15px; height: 15px; border-radius: 3px; margin: 0 13px 0 2px; background: #0d99ff; display: grid; place-items: center; }
.exp input:checked::after { content: ""; width: 8px; height: 4px; border: solid #fff; border-width: 0 0 2px 2px; transform: translateY(-1px) rotate(-45deg); }
.thin { height: 61px; display: flex; align-items: center; justify-content: space-between; color: #888; }
.thin h2 { font-weight: 500; }
.thin svg { width: 16px; height: 18px; margin-right: 2px; }
.right .export { height: 201px; padding-top: 10px; }
.export .r-row h2 { margin-right: auto; }
.export .add { margin-right: 2px; }
.r-row > .minus { margin-right: 24px; }
.opts ::placeholder { color: #b8b8b8; opacity: 1; }
.opts .scale { width: 60px; margin-right: 10px; }
.opts .suffix { width: 72px; height: 36px; border-bottom: 1px solid #e6e6e6; margin-right: 18px; }
.opts select { width: 33px; }
.opts .cv { width: 10px; height: 10px; color: #999; }
.opts .dots { width: 20px; height: 4px; margin-left: auto; }
.do-export { width: 100%; height: 40px; border: 1px solid #1e1e1e; border-radius: 8px; margin-top: 10px; white-space: nowrap; }
.preview { height: 60px; gap: 12px; margin-left: 2px; }
.preview svg { width: 6px; height: 8px; }
.help { position: absolute; right: 19px; bottom: 3px; width: 40px; height: 40px; border-radius: 50%; background: #1e1e1e; color: #fff; font-size: 22px; font-weight: 300; }

/* Taskbar */
.taskbar { height: 50px; flex: none; display: flex; align-items: stretch; font-family: "Open Sans", sans-serif; color: #1a1a1a;
  background: linear-gradient(#ececec, #ececec) 9px 0 / calc(100% - 62px) 16px no-repeat, radial-gradient(ellipse 90px 36px at 708px 32px, #e4e4e1 80%, transparent), linear-gradient(90deg, #eddac6, #eee7cb 22%, #e9e5cc 40%, #efebc9 47%, #ebe7cd 66%, #efeecb 80%, #f0efd2); }
.start { width: 60px; }
.start svg { width: 20px; height: 20px; }
.tb-search { width: 360px; background: #fff; border: 1px solid #c8c8c8; display: flex; align-items: center; padding-left: 14px; position: relative; }
.tb-mag { width: 20px; height: 20px; }
.tb-search input { margin-left: 15px; font-size: 18px; width: 200px; }
.tb-search ::placeholder { color: #333; opacity: 1; }
.hills { width: 98px; height: 34px; position: absolute; right: 0; bottom: 0; }
.apps { display: flex; margin-left: 3px; }
.apps button { width: 62px; height: 50px; border-bottom: 3px solid transparent; padding-top: 3px; }
.apps svg { width: 30px; height: 30px; }
.apps .part { border-image: linear-gradient(90deg, transparent 6px, #0078d7 6px 47px, #6badec 47px 57px, transparent 57px) 3; }
.apps .now { background: #f6f5ef; border-bottom-color: #0078d7; }
.tray { margin-left: auto; display: flex; align-items: center; gap: 12px; padding-right: 30px; }
.tray svg { width: 18px; height: 18px; }
.tray .sun { width: 28px; height: 28px; margin-right: -2px; }
.temp { font-size: 17px; white-space: nowrap; margin-right: 18px; }
.tray .t-up { width: 16px; height: 10px; }
.lang { font-size: 15px; margin: 0 2px; }
.clock { display: flex; flex-direction: column; align-items: center; line-height: 23px; font-size: 15px; }
.note { position: relative; margin-left: 11px; }
.note svg { width: 20px; height: 20px; }
.note b { position: absolute; left: 9px; top: 9px; width: 20px; height: 20px; border-radius: 50%; border: 1px solid #777; background: #dcdcd6; font-weight: 400; font-size: 14px; line-height: 18px; }
```
